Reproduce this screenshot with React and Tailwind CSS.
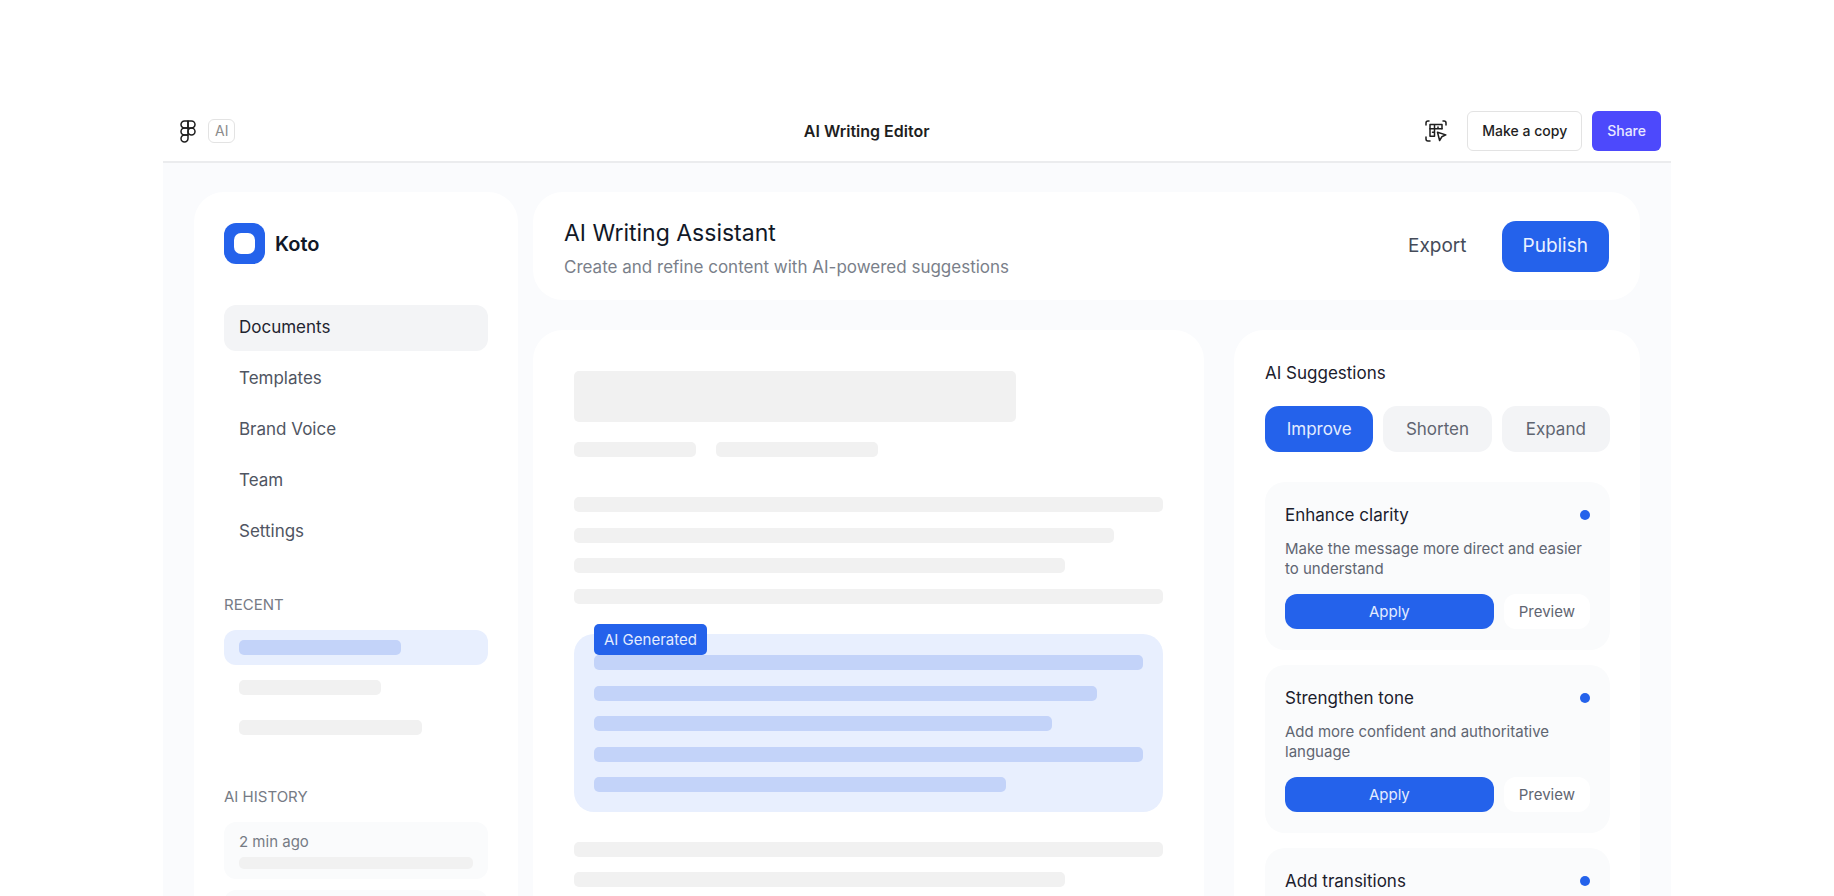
import { useState } from "react"
import { Figma } from "lucide-react"

const navItems = ["Documents", "Templates", "Brand Voice", "Team", "Settings"]

const tabs = ["Improve", "Shorten", "Expand"]

const suggestions = [
  {
    title: "Enhance clarity",
    text: "Make the message more direct and easier to understand",
  },
  {
    title: "Strengthen tone",
    text: "Add more confident and authoritative language",
  },
  {
    title: "Add transitions",
  },
]

const MeasureIcon = () => (
  <svg
    className="w-[22px] h-[22px]"
    viewBox="0 0 22 22"
    fill="none"
    stroke="currentColor"
    strokeWidth="1.5"
    strokeLinecap="round"
    strokeLinejoin="round"
    aria-hidden="true"
  >
    <path d="M1 5V3a2 2 0 0 1 2-2h1M18 1h1a2 2 0 0 1 2 2v2M1 17v2a2 2 0 0 0 2 2h2" />
    <path d="M17 8.700V4.500H5v11.700h4.500V4.500" />
    <path d="M5 8.700h12M13 7v1.500M7.500 12.300h1.500" />
    <path d="M12.500 12.200l8.300 2.700-4 1.900-2.200 3.700z" />
  </svg>
)

const Bar = ({ className }) => <div className={`h-[15px] rounded-[5px] ${className}`} />

const TopBar = () => (
  <header className="flex items-center justify-between h-[63px] pl-[13px] pr-[10px] bg-white border-b-2 border-[#ebecee]">
    <div className="flex items-center gap-2 w-[132px]">
      <Figma className="w-6 h-6 text-[#1e1e1e]" strokeWidth={1.5} />
      <span className="px-[6px] text-sm leading-[22px] text-[#8c8c8c] border border-[#e3e3e3] rounded-md">AI</span>
    </div>
    <h1 className="text-base font-semibold text-[#1e1e1e]">AI Writing Editor</h1>
    <div className="flex items-center gap-[10px]">
      <button className="mr-[10px] text-[#1e1e1e]" aria-label="Inspect">
        <MeasureIcon />
      </button>
      <button className="h-10 px-[14px] text-sm font-medium text-[#1e1e1e] bg-white border border-[#e3e3e3] rounded-md">
        Make a copy
      </button>
      <button className="h-10 px-[15px] text-sm font-medium text-[#e8e8ff] bg-[#4d49fc] rounded-md">Share</button>
    </div>
  </header>
)

const Sidebar = () => (
  <aside className="shrink-0 w-[324px] px-[30px] pt-[31px] pb-[30px] bg-white rounded-[30px]">
    <div className="flex items-center gap-[10px] h-[41px]">
      <div className="flex items-center justify-center w-[41px] h-[41px] bg-[#2462eb] rounded-xl">
        <div className="w-[21px] h-[21px] bg-white rounded-[7px]" />
      </div>
      <span className="text-xl font-semibold text-[#111827]">Koto</span>
    </div>

    <nav className="flex flex-col gap-[5px] mt-[41px]">
      {navItems.map((item, i) => (
        <a
          key={item}
          href="#"
          className={`flex items-center h-[46px] px-[15px] rounded-xl text-[17px] ${
            i === 0 ? "bg-[#f3f4f6] text-[#1f2430]" : "text-[#4f5562]"
          }`}
        >
          {item}
        </a>
      ))}
    </nav>

    <h2 className="mt-10 text-[15px] leading-5 text-[#767b85]">RECENT</h2>
    <div className="flex flex-col gap-[5px] mt-[15px]">
      <div className="px-[15px] py-[10px] bg-[#e8effe] rounded-xl">
        <Bar className="w-[162px] bg-[#c3d3f9]" />
      </div>
      <div className="px-[15px] py-[10px]">
        <Bar className="w-[142px] bg-[#f1f1f1]" />
      </div>
      <div className="px-[15px] py-[10px]">
        <Bar className="w-[183px] bg-[#f1f1f1]" />
      </div>
    </div>

    <h2 className="mt-[42px] text-[15px] leading-5 text-[#767b85]">AI HISTORY</h2>
    <div className="flex flex-col gap-[11px] mt-[15px]">
      <div className="px-[15px] py-[10px] bg-[#fafbfc] rounded-xl">
        <div className="text-[15px] leading-5 text-[#767b85]">2 min ago</div>
        <div className="h-3 mt-[5px] rounded-[5px] bg-[#f1f1f1]" />
      </div>
      <div className="h-[57px] bg-[#fafbfc] rounded-xl" />
    </div>
  </aside>
)

const PageHeader = () => (
  <div className="flex items-center justify-between h-[108px] px-[31px] bg-white rounded-[30px]">
    <div className="pt-[5px]">
      <h2 className="text-[23px] leading-8 text-[#111827]">AI Writing Assistant</h2>
      <p className="mt-1 text-[17px] leading-7 text-[#7a7f8a]">Create and refine content with AI-powered suggestions</p>
    </div>
    <div className="flex items-center gap-[15px]">
      <button className="h-[51px] px-5 pt-px text-[19px] text-[#454b59]">Export</button>
      <button className="h-[51px] px-[21px] pt-px text-[19px] text-[#eaf1ff] bg-[#2462eb] rounded-[14px]">Publish</button>
    </div>
  </div>
)

const Editor = () => (
  <main className="flex-1 min-w-0 px-[41px] py-[41px] bg-white rounded-[30px]">
    <div className="w-3/4 h-[51px] rounded-[5px] bg-[#f1f1f1]" />
    <div className="flex gap-5 mt-5">
      <Bar className="w-[122px] bg-[#f1f1f1]" />
      <Bar className="w-[162px] bg-[#f1f1f1]" />
    </div>

    <div className="flex flex-col justify-between h-[107px] mt-10">
      <Bar className="w-full bg-[#f1f1f1]" />
      <Bar className="w-11/12 bg-[#f1f1f1]" />
      <Bar className="w-10/12 bg-[#f1f1f1]" />
      <Bar className="w-full bg-[#f1f1f1]" />
    </div>

    <div className="relative flex flex-col justify-between h-[178px] mt-[30px] px-5 pt-[21px] pb-5 bg-[#e8effe] rounded-[20px]">
      <span className="absolute left-5 -top-[10px] h-[31px] px-[10px] text-[15px] leading-[31px] text-[#e3ecff] bg-[#2462eb] rounded-[5px]">
        AI Generated
      </span>
      <Bar className="w-full bg-[#c3d3f9]" />
      <Bar className="w-11/12 bg-[#c3d3f9]" />
      <Bar className="w-10/12 bg-[#c3d3f9]" />
      <Bar className="w-full bg-[#c3d3f9]" />
      <Bar className="w-3/4 bg-[#c3d3f9]" />
    </div>

    <div className="flex flex-col gap-[15px] mt-[30px]">
      <Bar className="w-full bg-[#f1f1f1]" />
      <Bar className="w-10/12 bg-[#f1f1f1]" />
      <Bar className="w-11/12 bg-[#f1f1f1]" />
    </div>
  </main>
)

const SuggestionCard = ({ title, text }) => (
  <div className="min-h-[168px] px-5 pt-5 bg-[#fafbfc] rounded-[20px]">
    <div className="flex items-center justify-between">
      <h3 className="text-[17px] leading-[26px] text-[#1b202c]">{title}</h3>
      <span className="w-[10px] h-[10px] bg-[#2462eb] rounded-full" />
    </div>
    {text && (
      <>
        <p className="mt-[11px] text-[15px] leading-5 text-[#5f6571]">{text}</p>
        <div className="flex gap-[10px] mt-[15px]">
          <button className="flex-1 h-[35px] pt-px text-[15px] text-[#e3ecff] bg-[#2462eb] rounded-xl">Apply</button>
          <button className="h-[35px] px-[15px] pt-px text-[15px] text-[#5f6571] bg-white rounded-xl">Preview</button>
        </div>
      </>
    )}
  </div>
)

const Suggestions = () => {
  const [activeTab, setActiveTab] = useState("Improve")

  return (
    <aside className="shrink-0 w-[406px] pl-[31px] pr-[30px] py-[30px] bg-white rounded-[30px]">
      <h2 className="text-[17px] leading-[27px] text-[#1b202c]">AI Suggestions</h2>
      <div className="grid grid-cols-3 gap-[10px] mt-[19px]">
        {tabs.map((tab) => (
          <button
            key={tab}
            onClick={() => setActiveTab(tab)}
            className={`h-[46px] pt-px text-[17px] rounded-[14px] ${
              activeTab === tab ? "bg-[#2462eb] text-[#e3ecff]" : "bg-[#f3f4f6] text-[#5f6571]"
            }`}
          >
            {tab}
          </button>
        ))}
      </div>
      <div className="flex flex-col gap-[15px] mt-[30px]">
        {suggestions.map((s) => (
          <SuggestionCard key={s.title} title={s.title} text={s.text} />
        ))}
      </div>
    </aside>
  )
}

const App = () => {
  return (
    <div className="h-screen overflow-hidden pt-[100px] bg-white font-['Inter',sans-serif]">
      <div className="w-full max-w-[1508px] mx-auto">
        <TopBar />
        <div className="flex gap-[15px] px-[31px] pt-[29px] bg-[#fafbfd]">
          <Sidebar />
          <div className="flex flex-col flex-1 min-w-0 gap-[30px]">
            <PageHeader />
            <div className="flex flex-1 gap-[30px]">
              <Editor />
              <Suggestions />
            </div>
          </div>
        </div>
      </div>
    </div>
  )
}

export default App
